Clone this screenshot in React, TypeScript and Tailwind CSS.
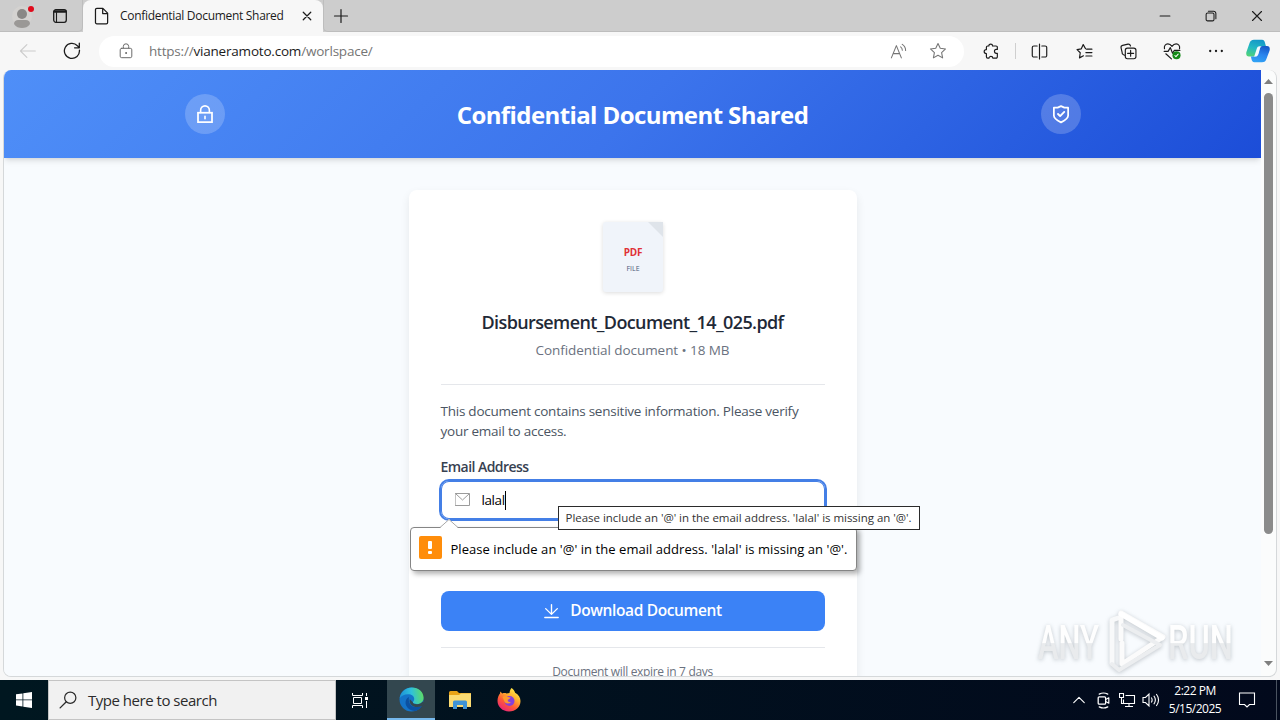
import type { ReactNode } from 'react';

type IconProps = { size?: number; className?: string; children: ReactNode };

const Icon = ({ size = 16, className = '', children }: IconProps) => (
    <svg
        width={size}
        height={size}
        viewBox="0 0 16 16"
        fill="none"
        stroke="currentColor"
        strokeLinecap="round"
        strokeLinejoin="round"
        className={`shrink-0 ${className}`}
    >
        {children}
    </svg>
);

const TabStrip = () => (
    <div className="flex h-8 bg-[#cdcdcd] text-[#1b1b1b]">
        <div className="flex w-[83px] items-center rounded-br-[5px] border-r border-b border-[#bdbdbd] pl-[12px]">
            <svg width="24" height="28" viewBox="0 0 24 28" className="shrink-0">
                <circle cx="10" cy="14" r="10" fill="#d4d2d0" />
                <circle cx="10" cy="12" r="5" fill="#8a8886" />
                <path d="M2 22c0-3 2-4 4-4h8c2 0 4 1 4 4-2 3-5 4-8 4s-6-1-8-4z" fill="#9a9896" />
                <circle cx="19" cy="7" r="3" fill="#e00b1c" />
            </svg>
            <Icon className="ml-[16px]">
                <rect x="1.7" y="1.7" width="12.6" height="12.6" rx="2.2" strokeWidth="1.3" />
                <path d="M2.500 3.500h11" strokeWidth="2.400" />
                <path d="M4.500 4.500v9.300" strokeWidth="1.100" />
            </Icon>
        </div>
        <div className="flex w-[240px] items-center rounded-t-lg bg-[#f7f7f7] pl-[10px]">
            <Icon size={18}>
                <path d="M3.4 1.2h5.4l4.2 4.3v8.2a1.2 1.2 0 0 1-1.2 1.2H3.4a1.2 1.2 0 0 1-1.2-1.2V2.4a1.2 1.2 0 0 1 1.2-1.2zM8.6 1.4v4.4H13" strokeWidth="1.1" />
            </Icon>
            <span className="ml-[9px] w-[180px] text-[12px] tracking-[-0.3px] whitespace-nowrap">Confidential Document Shared</span>
            <Icon size={10} className="ml-[2px]">
                <path d="M2 2l12 12M14 2L2 14" strokeWidth="2" />
            </Icon>
        </div>
        <div className="flex flex-1 items-center rounded-bl-[5px] border-b border-l border-[#bdbdbd] pl-[9px]">
            <Icon>
                <path d="M8 1.5v13M1.5 8h13" strokeWidth="1.2" />
            </Icon>
            <div className="ml-auto flex items-center gap-[34px] pr-[17px]">
                <Icon size={12}>
                    <path d="M1.5 8h13" strokeWidth="1.5" />
                </Icon>
                <Icon size={12}>
                    <rect x="1.5" y="4" width="10.5" height="10.5" rx="2" strokeWidth="1.4" />
                    <path d="M4.5 1.6h7a3 3 0 0 1 3 3v7" strokeWidth="1.4" />
                </Icon>
                <Icon size={12}>
                    <path d="M2 2l12 12M14 2L2 14" strokeWidth="1.5" />
                </Icon>
            </div>
        </div>
    </div>
);

const CopilotLogo = () => (
    <svg width="24" height="24" viewBox="0 0 24 24" className="shrink-0">
        <defs>
            <linearGradient id="copLeft" x1="0.6" y1="0" x2="0.3" y2="1">
                <stop offset="0" stopColor="#1496c8" />
                <stop offset="0.5" stopColor="#22b8c4" />
                <stop offset="1" stopColor="#4fd27a" />
            </linearGradient>
            <linearGradient id="copRight" x1="0.6" y1="0" x2="0.3" y2="1">
                <stop offset="0" stopColor="#1758c8" />
                <stop offset="0.5" stopColor="#2b85ee" />
                <stop offset="1" stopColor="#31a3f5" />
            </linearGradient>
        </defs>
        <path d="M8 .8h8c2 0 2.600 1.400 3.100 3.400l.8 2.700h-3.200c-2 0-2.700 1-3.300 3l-1.200 4.200C11.600 16.600 10.500 17.500 8.500 17.500H3C.6 17.500-.2 15.500.4 13L3.400 4.400C4.200 2 5.500.8 8 .8z" fill="url(#copLeft)" />
        <path d="M16 23.200H8.500c-2 0-2.600-1.400-3.100-3.400l-.5-2.300h3.600c2 0 3.100-.9 3.700-3l1.200-4.200c.6-2 1.300-3.400 3.300-3.400H21c2.400 0 3.200 2 2.600 4.500l-3 8C19.800 22 18.500 23.200 16 23.200z" fill="url(#copRight)" />
        <path d="M15 7.200h-1.500c-1.300 0-2.200.8-2.600 2.100L8.700 16c-.3.900-.5 1.300-1 1.600h1.600c1.900 0 2.800-1.200 3.300-3.100l1.200-4.200c.4-1.500.6-2.400 1.200-3.100z" fill="#f4faff" />
    </svg>
);

const Toolbar = () => (
    <div className="flex h-[38px] items-center bg-[#f7f7f7] text-[#1b1b1b]">
        <Icon size={18} className="ml-[19px] text-[#cccccc]">
            <path d="M14.500 8H1.500M7 2.300L1.300 8 7 13.700" strokeWidth="1" />
        </Icon>
        <Icon size={18} className="ml-[26px]">
            <path d="M14.600 7.200A6.700 6.700 0 1 1 12.800 3.300L14.500 5M14.500 1v4.200h-4.200" strokeWidth="1.150" />
        </Icon>
        <div className="ml-[18px] flex h-[31px] w-[865px] items-center rounded-full bg-white pr-[17px] pl-[19px]">
            <Icon className="text-[#6b6b6b]">
                <rect x="2.200" y="5.300" width="11.600" height="9.400" rx="1.500" strokeWidth="1" />
                <path d="M5.300 5V3.500a2.700 2.700 0 0 1 5.400 0V5" strokeWidth="1" />
                <circle cx="8" cy="10" r="0.500" fill="currentColor" />
            </Icon>
            <span className="ml-[15px] text-[13.500px] tracking-[-0.2px] whitespace-nowrap text-[#757575]">
                https://<span className="text-[#1b1b1b]">vianeramoto.com</span>/worlspace/
            </span>
            <Icon size={17} className="ml-auto text-[#757575]">
                <path d="M1.300 14L6 2.500 10.700 14M2.900 10h6.200M10 3.600c1 .8 1.600 2 1.600 3.200M11.500 1.300c2 1.300 3.200 3.200 3.200 5.700" strokeWidth="1" />
            </Icon>
            <Icon size={18} className="ml-[22px] text-[#757575]">
                <path d="M8 1.300l2 4.300 4.700.6-3.500 3.200.9 4.700L8 11.800l-4.100 2.300.9-4.700L1.300 6.200 6 5.600z" strokeWidth="0.950" />
            </Icon>
        </div>
        <Icon size={17} className="ml-[19px]">
            <path d="M5.500 2.800c0-2.400 3.500-2.400 3.500 0h3.300a1.200 1.200 0 0 1 1.200 1.200v2h-1c-2.300 0-2.300 3.700 0 3.700h1V13a1.200 1.200 0 0 1-1.200 1.200H9.200c0-2.100-3.500-2.100-3.500 0H4.400A1.200 1.200 0 0 1 3.200 13v-3C.4 10 .4 6.200 3.200 6.200V4a1.200 1.200 0 0 1 1.200-1.200z" strokeWidth="1.100" />
        </Icon>
        <div className="ml-[15px] h-4 w-px bg-[#cfcfcf]" />
        <Icon size={17} className="ml-[15px]">
            <path d="M8 1v14M5.800 2.800H2.700a1.500 1.500 0 0 0-1.500 1.500v7.400a1.500 1.500 0 0 0 1.500 1.500h3.100M10.200 2.800h3.100a1.500 1.500 0 0 1 1.500 1.500v7.400a1.500 1.500 0 0 1-1.500 1.500h-3.100" strokeWidth="1.100" />
        </Icon>
        <Icon size={17} className="ml-[28px]">
            <path d="M9 5.400L6.800 1.500 5 5.500l-4 .7 3 3-.7 4.800L7 12M10 5.800h5M9.300 9h5.700M9.300 12.200h5.700" strokeWidth="1.100" />
        </Icon>
        <Icon size={17} className="ml-[27px]">
            <path d="M4.300 11.500L3 10.900a2 2 0 0 1-1-2L1 4.500a2 2 0 0 1 1.500-2.300l5-1.100c1.200-.2 2 .4 2.400 1.700" strokeWidth="1.100" />
            <rect x="5" y="4.800" width="10" height="10" rx="2" strokeWidth="1.100" />
            <path d="M10 7v5.500M7.200 9.800h5.600" strokeWidth="1.100" />
        </Icon>
        <Icon size={18} className="ml-[26px]">
            <path d="M1.300 6C.8 3.500 2.200 1.700 4.300 1.700c1.700 0 2.800.9 3.700 2.200.9-1.300 2-2.200 3.700-2.200 2.100 0 3.500 1.800 3 4.300M1 8.300h3.500L6.500 5l2 5 1.500-2.500h5M2.500 10.500L7.500 15" strokeWidth="1.050" />
            <circle cx="12" cy="11.800" r="3.600" fill="#138a17" stroke="none" />
            <path d="M10.500 12l1 1 2-2.200" stroke="#fff" strokeWidth="0.900" />
        </Icon>
        <Icon className="ml-[27px]">
            <path d="M2.200 8h.02M8 8h.02M13.800 8h.02" strokeWidth="2.300" />
        </Icon>
        <div className="ml-[22px]">
            <CopilotLogo />
        </div>
    </div>
);

const PageHeader = () => (
    <header className="flex h-[88px] shrink-0 justify-center bg-linear-135 from-[#4f8ff8] via-[#3c74ec] to-[#1c4dd8] text-white shadow-md">
        <div className="flex w-[896px] items-center justify-between">
            <div className="flex size-10 items-center justify-center rounded-full bg-white/20">
                <Icon size={20}>
                    <rect x="2.400" y="7" width="11.200" height="7.500" strokeWidth="1.400" strokeLinejoin="miter" />
                    <path d="M4.500 6.800V5a3.500 3.500 0 0 1 7 0v1.800M8 9.800v2" strokeWidth="1.300" />
                </Icon>
            </div>
            <h1 className="pt-[2px] text-[24px] font-bold tracking-[-0.590px] whitespace-nowrap">Confidential Document Shared</h1>
            <div className="flex size-10 items-center justify-center rounded-full bg-white/20">
                <Icon size={20}>
                    <path d="M2.300 2.900h3L8 1.700l2.700 1.200h3v6.300c0 2.400-2.700 4-5.700 5.500-3-1.500-5.700-3.100-5.700-5.500z" strokeWidth="1.400" />
                    <path d="M5.600 8l1.700 1.700 3.300-3.400" strokeWidth="1.500" />
                </Icon>
            </div>
        </div>
    </header>
);

const DocumentThumb = () => (
    <div className="relative flex h-[70px] w-[60px] flex-col items-center rounded-[3px] bg-[#f0f4fa] pt-[23px] shadow-[0_1px_4px_rgba(0,0,0,0.14)]">
        <svg width="15" height="15" className="absolute top-0 right-0">
            <path d="M0 0h15v15z" fill="#dfe4ea" />
        </svg>
        <span className="ml-px text-[10px] leading-[14px] font-bold tracking-[-0.3px] text-[#e03136]">PDF</span>
        <span className="mt-[3px] ml-px text-[7px] leading-[13px] text-[#4a5b78]">FILE</span>
    </div>
);

const message = "Please include an '@' in the email address. 'lalal' is missing an '@'.";

const ValidationBubble = () => (
    <div className="absolute top-[46px] -left-[31px] flex h-[44px] w-[447px] items-center rounded-[4px] border border-[#858585] bg-white pl-[8px] shadow-[3px_3px_5px_rgba(0,0,0,0.3)]">
        <svg width="18" height="9" className="absolute -top-[9px] left-[29px]">
            <path d="M0 9L9 0l9 9z" fill="#fff" />
            <path d="M0 8.500L9 .5l9 8" fill="none" stroke="#a8a8a8" />
        </svg>
        <div className="mb-[3px] flex h-[23px] w-[23px] flex-col items-center justify-center gap-[2px] rounded-[2px] bg-[#ff8d0a]">
            <div className="h-[8px] w-[4px] rounded-[1px] bg-white" />
            <div className="h-[3px] w-[4px] rounded-[1px] bg-white" />
        </div>
        <span className="ml-[9px] pt-px text-[13px] tracking-[0.050px] whitespace-nowrap text-black">{message}</span>
    </div>
);

const HoverTooltip = () => (
    <div className="absolute top-[25px] left-[117px] flex h-[24px] w-[362px] items-center border border-[#2b2b2b] bg-white pl-[7px] text-[11.500px] tracking-[-0.030px] whitespace-nowrap text-[#333]">
        {message}
    </div>
);

const DocumentCard = () => (
    <div className="mt-8 flex w-[448px] flex-col items-center rounded-lg bg-white px-8 pt-8 pb-8 shadow-[0_4px_10px_rgba(0,0,0,0.08)]">
        <DocumentThumb />
        <h2 className="mt-[16px] text-[18px] leading-[28px] font-semibold tracking-[-0.610px] whitespace-nowrap text-[#1f2937]">
            Disbursement_Document_14_025.pdf
        </h2>
        <p className="mt-[4px] text-[13.500px] leading-5 tracking-[-0.060px] whitespace-nowrap text-[#6b7280]">Confidential document • 18 MB</p>
        <div className="mt-[24px] w-full border-t border-gray-200 pt-4">
            <p className="text-[13.500px] leading-5 tracking-[-0.240px] whitespace-nowrap text-[#4b5563]">
                This document contains sensitive information. Please verify
                <br />
                your email to access.
            </p>
            <label className="mt-4 block text-[14px] leading-5 font-semibold tracking-[-0.550px] text-[#374151]">Email Address</label>
            <div className="relative mt-[4px] h-[38px] w-full">
                <div className="flex h-[38px] items-center rounded-lg bg-white pl-[14px] ring-1 ring-[#447fe6] ring-inset outline-2 outline-[#447fe6]">
                    <Icon size={16} className="text-[#9b9b9b]">
                        <rect x="0.500" y="1.500" width="14" height="12" strokeWidth="1" />
                        <path d="M1 2l6.500 6 6.500-6" strokeWidth="1" />
                    </Icon>
                    <span className="ml-[11px] text-[13.500px] tracking-[-0.4px] text-black">lalal</span>
                    <span className="h-[19px] w-px bg-black" />
                </div>
                <ValidationBubble />
                <HoverTooltip />
            </div>
        </div>
        <div className="mt-[72px] flex h-10 w-full shrink-0 items-center justify-center rounded-lg bg-[#3b82f6] text-white">
            <Icon size={17}>
                <path d="M8 1.500v8.700M2.500 5.300L8 10.700l5.500-5.400M1.700 13.700h12.600" strokeWidth="1.300" />
            </Icon>
            <span className="ml-[10px] text-[15.500px] font-semibold tracking-[-0.360px] whitespace-nowrap">Download Document</span>
        </div>
        <div className="mt-4 w-full border-t border-gray-200 pt-4 text-center text-[12px] leading-4 tracking-[-0.330px] text-[#6b7280]">
            Document will expire in 7 days
        </div>
    </div>
);

const Watermark = () => (
    <svg
        width="210"
        height="74"
        viewBox="0 0 210 74"
        className="absolute top-[533px] left-[1030px] drop-shadow-[0_1px_2px_rgba(90,100,110,0.35)]"
    >
        <defs>
            <linearGradient id="wm" x1="0" y1="0" x2="0" y2="1">
                <stop offset="0.500" stopColor="#fefefe" />
                <stop offset="0.520" stopColor="#e9ebed" />
            </linearGradient>
        </defs>
        <g fill="url(#wm)" fontFamily="Roboto" fontSize="49" fontWeight="500">
            <text x="8" y="56" textLength="61" lengthAdjust="spacingAndGlyphs">ANY</text>
            <text x="138" y="56" textLength="65" lengthAdjust="spacingAndGlyphs">RUN</text>
        </g>
        <g fill="none" strokeWidth="5" strokeLinejoin="round" strokeLinecap="round">
            <path d="M82 60V17l6-2" stroke="#f8f9fa" />
            <path d="M91 36V10l42 24-41 27V40" stroke="#fbfbfb" />
            <path d="M93 22l37 20-41 25-7-6" stroke="#eceef0" strokeWidth="4" />
            <path d="M91 11l41 24" stroke="#fff" />
        </g>
    </svg>
);

const Scrollbar = () => (
    <div className="flex w-[15px] flex-col items-center rounded-r-lg bg-[#fbfcfc] pt-[9px] pb-[10px]">
        <svg width="9" height="5">
            <path d="M0 5L4.500 0 9 5z" fill="#7f7f7f" />
        </svg>
        <div className="mt-[9px] h-[441px] w-[9px] rounded-full bg-[#8b8b8b]" />
        <svg width="9" height="5" className="mt-auto">
            <path d="M0 0l4.500 5L9 0z" fill="#7f7f7f" />
        </svg>
    </div>
);

const EdgeLogo = () => (
    <svg width="25" height="25" viewBox="0 0 24 24">
        <defs>
            <linearGradient id="edgeTop" x1="0" y1="0.500" x2="1" y2="0.400">
                <stop offset="0" stopColor="#1c8fd6" />
                <stop offset="0.500" stopColor="#2fc0dc" />
                <stop offset="1" stopColor="#5fdc62" />
            </linearGradient>
        </defs>
        <circle cx="12" cy="12" r="11.500" fill="#1473c8" />
        <path d="M.6 11C1.500 4.500 6.500.4 12.300.4 19 .4 23.600 5 23.600 10.200c0 3.900-3 6.200-6.300 6.200-2.600 0-4-.9-4-1.700 0-.6 1.300-1.200 1.300-3.200 0-2.500-2.400-4.500-5.900-4.500C5 7 1.800 8.800.6 11z" fill="url(#edgeTop)" />
        <path d="M9.500 9.500c-3 1.500-4 5-2.500 8.500 1.500 3.200 5 5.200 8.500 5 3-.8 5.300-2.600 6.700-5-4 2.200-9.300 1.500-11.500-1.500-1.500-2.200-1.500-4.700-1.200-7z" fill="#0c50a0" />
        <path d="M13.300 14.700c0 1 1.500 1.900 4 1.900 2.200 0 4.200-1 5.300-2.400l1.400.5-1.600 3.400c-3.700 2-8.800 1.500-11.200-1.600-1-1.500-1.200-3-.8-4.800z" fill="#33474f" />
    </svg>
);

const FolderLogo = () => (
    <svg width="22" height="20" viewBox="0 0 22 20">
        <path d="M0 2.500A1.500 1.500 0 0 1 1.500 1H8l2 2h12v4H0z" fill="#e8a317" />
        <path d="M0 5h10l2-1.500h10V17H0z" fill="#fbdb72" />
        <path d="M4 19v-7a1.500 1.500 0 0 1 1.500-1.500h11A1.500 1.500 0 0 1 18 12v7h-4v-4H8v4z" fill="#3e93d6" />
        <path d="M8 15h6v2H8z" fill="#fbdb72" />
    </svg>
);

const FirefoxLogo = () => (
    <svg width="24" height="24" viewBox="0 0 24 24">
        <defs>
            <linearGradient id="fox" x1="0.850" y1="0.050" x2="0.250" y2="1">
                <stop offset="0" stopColor="#fff04a" />
                <stop offset="0.350" stopColor="#ffb02e" />
                <stop offset="0.650" stopColor="#ff5a36" />
                <stop offset="1" stopColor="#e9207c" />
            </linearGradient>
        </defs>
        <path d="M14.500 0c2 1.200 3.200 3 3.600 4.800C21.500 6.500 23.500 9.500 23.500 13c0 6-5 10.500-11.500 10.500S.5 18.800.5 12.800C.5 9.500 1.800 7 3 5.500L3.300 3.600 5.300 5.500c1.500-.6 3-.6 4.200 0L12.500 5c.2-2 .9-3.800 2-5z" fill="url(#fox)" />
        <circle cx="12.500" cy="13" r="5" fill="#8440dc" />
        <path d="M5.500 9c2-1.500 4.200-1.300 5.500 0l2.500.5c-.3 1.200-1.500 1.700-2.700 2.300-.3 1.600 1 2.600 3 2.200-1.700 2.700-6.300 1.700-6.800-1.500z" fill="#ff9a2c" />
    </svg>
);

const Taskbar = () => (
    <div className="flex h-10 bg-linear-to-r from-[#001720] to-[#02091c] text-white">
        <div className="flex w-12 items-center justify-center">
            <svg width="16" height="16" viewBox="0 0 16 16" fill="#fff">
                <path d="M0 2.300L6.500 1.400v6.100H0zM7.300 1.300L16 0v7.500H7.300zM0 8.300h6.500v6.200L0 13.600zM7.300 8.300H16V16l-8.700-1.300z" />
            </svg>
        </div>
        <div className="flex w-[288px] items-center border border-[#c4c4c4] bg-[#f1f1f1] pl-[10px] text-[#2b2b2b]">
            <Icon size={18}>
                <circle cx="10" cy="6" r="5" strokeWidth="1.100" />
                <path d="M6.500 9.500L1 15" strokeWidth="1.200" />
            </Icon>
            <span className="ml-[11px] text-[15px] tracking-[-0.480px] whitespace-nowrap">Type here to search</span>
        </div>
        <div className="flex w-[51px] items-center justify-center pr-[3px]">
            <svg width="17" height="17" viewBox="0 0 17 17" fill="none" stroke="#fff">
                <path d="M.5 1v2.500h10V1M.5 16v-2.500h10V16M1.500 5.500h8v6h-8zM14.500 1v3M14.500 9v7" />
                <path d="M13 5h3v3h-3z" fill="#fff" stroke="none" />
            </svg>
        </div>
        <div className="flex w-12 items-center justify-center border-b-2 border-[#76b9ed] bg-[#33474f]">
            <EdgeLogo />
        </div>
        <div className="flex w-[49px] items-center justify-center">
            <FolderLogo />
        </div>
        <div className="flex w-[49px] items-center justify-center">
            <FirefoxLogo />
        </div>
        <div className="ml-auto flex items-center">
            <Icon size={14}>
                <path d="M2 11l6-6 6 6" strokeWidth="1.300" />
            </Icon>
            <Icon size={17} className="ml-[9px]">
                <rect x="3" y="4.500" width="7" height="7" rx="1" strokeWidth="1.200" />
                <path d="M10 7l3-1.500v5L10 9M4 2c2.500-1.300 5.500-1.300 8 0M4 14c2.500 1.300 5.500 1.300 8 0" strokeWidth="1.100" />
            </Icon>
            <svg width="17" height="16" viewBox="0 0 17 16" fill="none" stroke="#fff" className="ml-[7px]">
                <path d="M6.500 3.500h9v8h-11v-4M10 11.500v3M6 14.500h8M.5 1.500h4v4h-4zM2.500 5.500v6h2" strokeWidth="1.100" />
            </svg>
            <svg width="18" height="16" viewBox="0 0 18 16" fill="none" stroke="#fff" className="ml-[6px]">
                <path d="M1 5.500h2.500L7 2v12l-3.500-3.500H1zM9.300 5.500c1 1.500 1 3.500 0 5M11.800 3.700c1.900 2.600 1.900 6 0 8.600M14.300 2c2.700 3.600 2.700 8.400 0 12" strokeWidth="1.100" />
            </svg>
            <div className="ml-[8px] flex w-[54px] flex-col items-center text-[12px] leading-[18px] tracking-[-0.500px] whitespace-nowrap">
                <span>2:22 PM</span>
                <span>5/15/2025</span>
            </div>
            <svg width="18" height="18" viewBox="0 0 18 18" fill="none" stroke="#fff" className="ml-[16px]">
                <path d="M1.500 2h15v11.500h-5L9 16l-2.500-2.500h-5z" strokeWidth="1.100" />
            </svg>
            <div className="ml-[20px] h-10 w-px bg-[#4a5360]" />
            <div className="w-[3px]" />
        </div>
    </div>
);

const App = () => (
    <div className="flex h-[720px] w-[1280px] flex-col overflow-hidden bg-[#f7f7f7] font-['Open_Sans','Noto_Sans',sans-serif]">
        <TabStrip />
        <Toolbar />
        <div className="relative flex h-[610px] px-[3px] pb-[3px]">
            <main className="flex flex-1 overflow-hidden rounded-lg border-x border-b border-[#d5d8da]">
                <div className="flex w-[1257px] flex-col items-center overflow-hidden bg-[#f8fbfe]">
                    <div className="w-full">
                        <PageHeader />
                    </div>
                    <DocumentCard />
                </div>
                <Scrollbar />
            </main>
            <Watermark />
        </div>
        <Taskbar />
    </div>
);

export default App;
